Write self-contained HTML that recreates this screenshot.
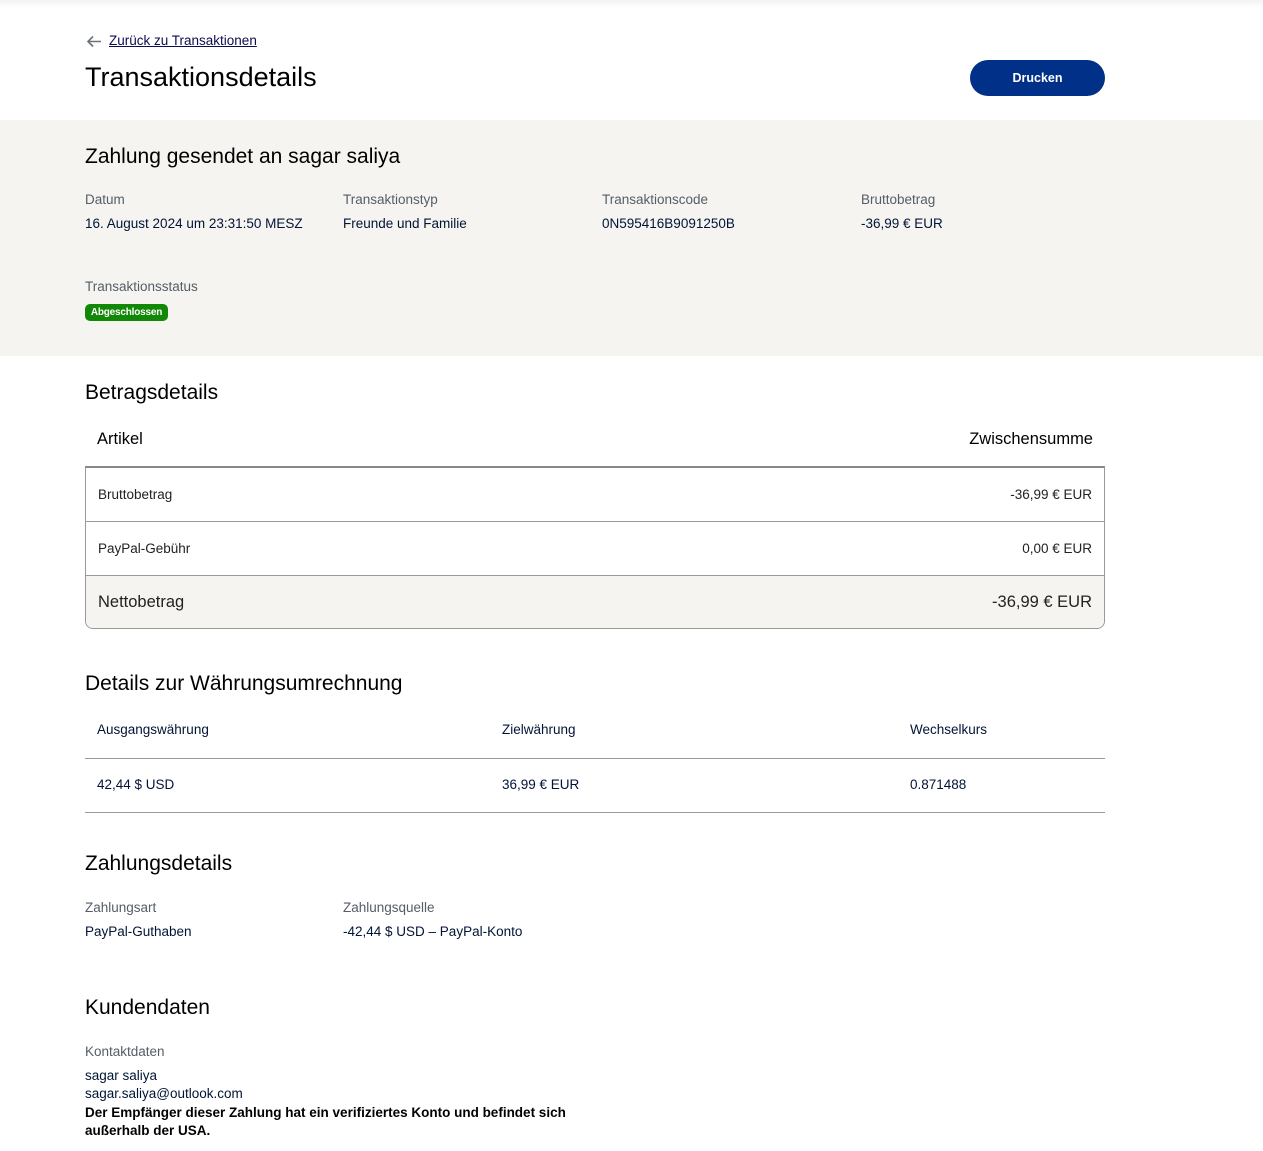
<!DOCTYPE html>
<html><head><meta charset="utf-8"><style>
*{margin:0;padding:0;box-sizing:border-box}
body{width:1263px;height:1151px;background:#fff;font-family:"Liberation Sans",sans-serif;color:#000;position:relative;overflow:hidden}
.a{position:absolute;white-space:nowrap}
.lbl{color:#545d68;font-size:13.5px}
.val{font-size:13.5px;color:#001435}
h2{font-weight:normal;font-size:21px}
</style></head><body>
<div class="a" style="left:0;top:0;width:1263px;height:8px;background:linear-gradient(#f2f2f2,#fff)"></div>
<svg class="a" style="left:86px;top:35px" width="16" height="13" viewBox="0 0 16 13"><path d="M15 6.5H2M7 1.5L2 6.5L7 11.5" stroke="#6c7378" stroke-width="1.6" fill="none"/></svg>
<div class="a" style="left:109px;top:33px;font-size:13.5px;color:#0c0c4e;text-decoration:underline">Zurück zu Transaktionen</div>
<div class="a" style="left:85px;top:62px;font-size:27px;color:#000">Transaktionsdetails</div>
<div class="a" style="left:970px;top:60px;width:135px;height:36px;background:#003087;border-radius:18px;color:#fff;font-size:12.5px;font-weight:bold;text-align:center;line-height:36px">Drucken</div>
<div class="a" style="left:0;top:120px;width:1263px;height:236px;background:#f5f4f0"></div>
<h2 class="a" style="left:85px;top:145px">Zahlung gesendet an sagar saliya</h2>
<div class="a lbl" style="left:85px;top:192px">Datum</div>
<div class="a val" style="left:85px;top:216px">16. August 2024 um 23:31:50 MESZ</div>
<div class="a lbl" style="left:343px;top:192px">Transaktionstyp</div>
<div class="a val" style="left:343px;top:216px">Freunde und Familie</div>
<div class="a lbl" style="left:602px;top:192px">Transaktionscode</div>
<div class="a val" style="left:602px;top:216px">0N595416B9091250B</div>
<div class="a lbl" style="left:861px;top:192px">Bruttobetrag</div>
<div class="a val" style="left:861px;top:216px">-36,99 € EUR</div>
<div class="a lbl" style="left:85px;top:279px">Transaktionsstatus</div>
<div class="a" style="left:85px;top:304px;height:17px;width:83px;text-align:center;background:#128807;border-radius:5px;color:#fff;font-size:10px;font-weight:bold;line-height:17px;letter-spacing:-0.2px">Abgeschlossen</div>
<h2 class="a" style="left:85px;top:381px">Betragsdetails</h2>
<div class="a" style="left:97px;top:430px;font-size:16.5px">Artikel</div>
<div class="a" style="right:170px;top:430px;font-size:16.5px">Zwischensumme</div>
<div class="a" style="left:85px;top:466px;width:1020px;height:163px;border:1px solid #999;border-top:2px solid #888;border-radius:0 0 8px 8px;overflow:hidden">
 <div style="height:54px;border-bottom:1px solid #999;display:flex;justify-content:space-between;align-items:center;padding:0 12px;font-size:13.5px;color:#222"><span>Bruttobetrag</span><span>-36,99 € EUR</span></div>
 <div style="height:54px;border-bottom:1px solid #999;display:flex;justify-content:space-between;align-items:center;padding:0 12px;font-size:13.5px;color:#222"><span>PayPal-Gebühr</span><span>0,00 € EUR</span></div>
 <div style="height:53px;background:#f5f4f0;display:flex;justify-content:space-between;align-items:center;padding:0 12px;font-size:16.5px;color:#222"><span>Nettobetrag</span><span>-36,99 € EUR</span></div>
</div>
<h2 class="a" style="left:85px;top:672px">Details zur Währungsumrechnung</h2>
<div class="a val" style="left:97px;top:722px">Ausgangswährung</div>
<div class="a val" style="left:502px;top:722px">Zielwährung</div>
<div class="a val" style="left:910px;top:722px">Wechselkurs</div>
<div class="a" style="left:85px;top:758px;width:1020px;height:1px;background:#999"></div>
<div class="a val" style="left:97px;top:777px">42,44 $ USD</div>
<div class="a val" style="left:502px;top:777px">36,99 € EUR</div>
<div class="a val" style="left:910px;top:777px">0.871488</div>
<div class="a" style="left:85px;top:812px;width:1020px;height:1px;background:#999"></div>
<h2 class="a" style="left:85px;top:852px">Zahlungsdetails</h2>
<div class="a lbl" style="left:85px;top:900px">Zahlungsart</div>
<div class="a val" style="left:85px;top:924px">PayPal-Guthaben</div>
<div class="a lbl" style="left:343px;top:900px">Zahlungsquelle</div>
<div class="a val" style="left:343px;top:924px">-42,44 $ USD – PayPal-Konto</div>
<h2 class="a" style="left:85px;top:996px">Kundendaten</h2>
<div class="a lbl" style="left:85px;top:1044px">Kontaktdaten</div>
<div class="a val" style="left:85px;top:1068px">sagar saliya</div>
<div class="a val" style="left:85px;top:1086px">sagar.saliya@outlook.com</div>
<div class="a" style="left:85px;top:1104px;font-size:13.5px;font-weight:bold;line-height:18px;white-space:normal;width:490px">Der Empfänger dieser Zahlung hat ein verifiziertes Konto und befindet sich außerhalb der USA.</div>
</body></html>
